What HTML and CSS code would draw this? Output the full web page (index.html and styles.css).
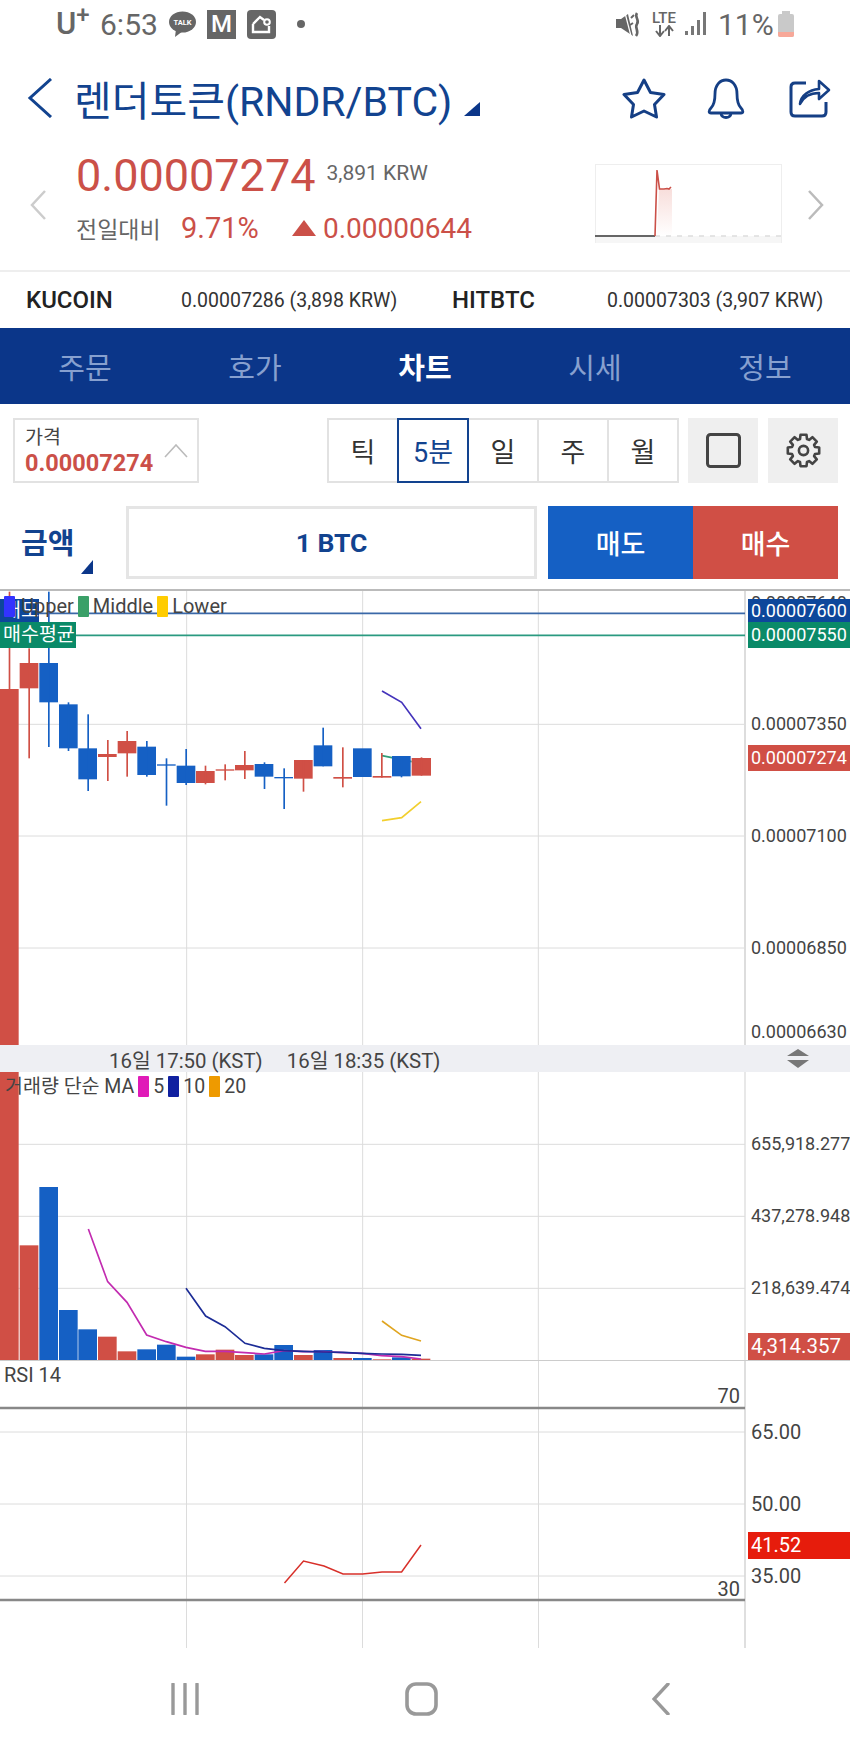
FILE: index.html
```html
<!DOCTYPE html>
<html lang="ko">
<head>
    <meta charset="UTF-8">
    <meta name="viewport" content="width=device-width, initial-scale=1.0">
    <title>렌더토큰 RNDR/BTC 차트</title>
    <link rel="stylesheet" href="styles.css">
</head>
<body>
    <div class="status-bar">
        <span class="carrier">U<sup>+</sup></span>
        <span class="clock">6:53</span>
        <svg class="ico-talk" width="27" height="26" viewBox="0 0 27 26">
            <ellipse cx="13.5" cy="11" rx="13.5" ry="10.5" fill="#666"/>
            <path d="M7 18 L6 26 L14 20 Z" fill="#666"/>
            <text x="13.5" y="14" text-anchor="middle" class="talk-text">TALK</text>
        </svg>
        <span class="app-box app-m">M</span>
        <span class="app-box app-home">
            <svg width="21" height="19" viewBox="0 0 21 19">
                <path d="M2 9 L9 2 L13 5 M2 9 V17 H18 V11" fill="none" stroke="#fff" stroke-width="2.4"/>
                <circle cx="16" cy="7" r="2.8" fill="none" stroke="#fff" stroke-width="2"/>
            </svg>
        </span>
        <span class="status-dot"></span>
        <span class="status-right">
            <svg width="25" height="25" viewBox="0 0 25 25">
                <path d="M0 7 H5 L12 2 L17 24 L5 16 H0 Z" fill="#666"/>
                <path d="M9 1 L15 24" stroke="#fff" stroke-width="1.2"/>
                <path d="M15 6 L18 3 M17 11 L14 13" fill="none" stroke="#666" stroke-width="2"/>
                <path d="M21 1 C18 5 24 8 21 12 C18 16 24 19 20 24" fill="none" stroke="#666" stroke-width="2.6"/>
            </svg>
            <span class="lte">LTE
                <svg width="24" height="12" viewBox="0 0 24 12">
                    <path d="M8 0 V9 M4 6 L8 11 L12 6 M17 11 V2 M13 6 L17 1 L21 6" fill="none" stroke="#666" stroke-width="2"/>
                </svg>
            </span>
            <svg class="ico-signal" width="21" height="24" viewBox="0 0 21 24">
                <path d="M0 19 h3 v4 h-3 Z M6 14 h3 v9 h-3 Z M12 8 h3 v15 h-3 Z M18 0 h3 v23 h-3 Z" fill="#777"/>
            </svg>
            <span class="battery-text">11%</span>
            <span class="battery"><span class="battery-low"></span></span>
        </span>
    </div>

    <div class="title-row">
        <svg width="26" height="40" viewBox="0 0 26 40">
            <path d="M24 1 L3 20 L24 39" fill="none" stroke="#12438f" stroke-width="3"/>
        </svg>
        <h1 class="pair-name">렌더토큰(RNDR/BTC)</h1>
        <span class="corner-arrow title-arrow"></span>
        <span class="title-icons">
            <svg width="44" height="41" viewBox="0 0 44 41">
                <path d="M22 2 L28.5 14.5 L42 16.5 L32.5 26.5 L34.5 39 L22 33 L9.5 39 L11.5 26.5 L2 16.5 L15.5 14.5 Z" fill="none" stroke="#153f85" stroke-width="3" stroke-linejoin="round"/>
            </svg>
            <svg width="40" height="41" viewBox="0 0 40 41">
                <path d="M5 30 C8 27 9 24 9 16 C9 7 14 2 20 2 C26 2 31 7 31 16 C31 24 32 27 35 30 C38 33 37 35 35 35 H5 C3 35 2 33 5 30 Z" fill="none" stroke="#153f85" stroke-width="2.8"/>
                <path d="M15 35 C15 41 25 41 25 35" fill="none" stroke="#153f85" stroke-width="2.8"/>
            </svg>
            <svg class="ico-share" width="42" height="40" viewBox="0 0 42 40">
                <path d="M17 5 H6 Q2 5 2 9 V34 Q2 38 6 38 H33 Q37 38 37 34 V24" fill="none" stroke="#153f85" stroke-width="3"/>
                <path d="M11 26 C12 17 20 12 30 11 V3 L40 12 L30 21 V15 C22 15 15 18 11 26 Z" fill="none" stroke="#153f85" stroke-width="2.6" stroke-linejoin="round"/>
            </svg>
        </span>
    </div>

    <div class="quote-row">
        <svg class="quote-prev" width="17" height="30" viewBox="0 0 17 30">
            <path d="M15 1 L2 15 L15 29" fill="none" stroke="#ccc" stroke-width="2.5"/>
        </svg>
        <div class="quote-main">
            <div class="quote-price">
                <span class="price-big">0.00007274</span>
                <span class="price-krw">3,891 KRW</span>
            </div>
            <div class="quote-change">
                <span class="change-label">전일대비</span>
                <span class="change-rate">9.71%</span>
                <span class="change-up"></span>
                <span class="change-value">0.00000644</span>
            </div>
        </div>
        <svg class="spark" width="187" height="79" viewBox="0 0 187 79">
            <defs>
                <linearGradient id="sparkFill" x1="0" y1="0" x2="0" y2="1">
                    <stop offset="0" stop-color="#f8dedb"/>
                    <stop offset="1" stop-color="#fff"/>
                </linearGradient>
            </defs>
            <rect x="0.5" y="0.5" width="186" height="78" fill="#fff" stroke="#eee"/>
            <rect x="1" y="72" width="185" height="7" fill="#f6f6f6"/>
            <path d="M64 25 H77 V72 H62 Z" fill="url(#sparkFill)"/>
            <path d="M60 72 H186" stroke="#ddd" stroke-width="1.5" stroke-dasharray="5 6"/>
            <path d="M0 72 H60" stroke="#666" stroke-width="2"/>
            <path d="M60 72 L62 6 L64.5 25 L69 25 L72 24.5 L74 25 L76 23" fill="none" stroke="#cb5048" stroke-width="1.6"/>
        </svg>
        <svg class="quote-next" width="17" height="30" viewBox="0 0 17 30">
            <path d="M2 1 L15 15 L2 29" fill="none" stroke="#bbb" stroke-width="2.5"/>
        </svg>
    </div>

    <div class="exchanges">
        <strong>KUCOIN</strong>
        <span>0.00007286 (3,898 KRW)</span>
        <strong>HITBTC</strong>
        <span>0.00007303 (3,907 KRW)</span>
    </div>

    <nav class="main-tabs">
        <a>주문</a>
        <a>호가</a>
        <a class="on">차트</a>
        <a>시세</a>
        <a>정보</a>
    </nav>

    <div class="controls">
        <div class="price-box">
            <div>
                <div class="price-box-label">가격</div>
                <div class="price-box-value">0.00007274</div>
            </div>
            <svg width="24" height="14" viewBox="0 0 24 14">
                <path d="M1 13 L12 1 L23 13" fill="none" stroke="#bbb" stroke-width="1.6"/>
            </svg>
        </div>
        <div class="period-tabs">
            <span class="period">틱</span>
            <span class="period on">5분</span>
            <span class="period">일</span>
            <span class="period">주</span>
            <span class="period">월</span>
        </div>
        <span class="tool-btn">
            <svg width="35" height="35" viewBox="0 0 35 35">
                <rect x="1.5" y="1.5" width="32" height="32" rx="3" fill="none" stroke="#444" stroke-width="3"/>
            </svg>
        </span>
        <span class="tool-btn">
            <svg width="35" height="35" viewBox="-17.5 -17.5 35 35">
                <path d="M-3 -15.7 L3 -15.7 L3.5 -11.5 L5.6 -10.6 L8.9 -13.3 L13.3 -8.9 L10.6 -5.6 L11.5 -3.5 L15.7 -3 L15.7 3 L11.5 3.5 L10.6 5.6 L13.3 8.9 L8.9 13.3 L5.6 10.6 L3.5 11.5 L3 15.7 L-3 15.7 L-3.5 11.5 L-5.6 10.6 L-8.9 13.3 L-13.3 8.9 L-10.6 5.6 L-11.5 3.5 L-15.7 3 L-15.7 -3 L-11.5 -3.5 L-10.6 -5.6 L-13.3 -8.9 L-8.9 -13.3 L-5.6 -10.6 L-3.5 -11.5 Z" fill="none" stroke="#444" stroke-width="2.6" stroke-linejoin="round"/>
                <circle r="4.6" fill="none" stroke="#444" stroke-width="2.6"/>
            </svg>
        </span>
    </div>

    <div class="order-row">
        <div class="amount-select">
            <span>금액</span>
            <span class="corner-arrow amount-arrow"></span>
        </div>
        <div class="amount-box">1 BTC</div>
        <button class="order-btn sell">매도</button>
        <button class="order-btn buy">매수</button>
    </div>

    <!-- price pane, chart units are a third of a pixel -->
    <section class="pane pane-price">
        <svg class="pane-svg" width="850" height="456" viewBox="0 12 2550 1368">
            <path class="grid" d="M560 12 V1380 M1088 12 V1380 M1615 12 V1380 M0 418 H2235 M0 753 H2235 M0 1089 H2235"/>
            <path class="axis-line" d="M2235 12 V1380"/>
            <path d="M0 85 H2235" stroke="#3a68a8" stroke-width="5"/>
            <path d="M0 151 H2235" stroke="#2a9a80" stroke-width="5"/>
            <path d="M1146 318 L1205 352 L1263 431" fill="none" stroke="#4433bb" stroke-width="5"/>
            <path d="M1146 707 L1205 698 L1263 650" fill="none" stroke="#f2cf2e" stroke-width="5"/>
            <path d="M1146 512 L1235 530" fill="none" stroke="#2f9e78" stroke-width="5"/>

            <g class="up">
                <rect x="0" y="312" width="56" height="1068"/>
                <rect x="26" y="20" width="5" height="292"/>
                <rect x="59" y="234" width="56" height="76"/>
                <rect x="85" y="190" width="5" height="330"/>
                <rect x="294" y="507" width="56" height="9"/>
                <rect x="321" y="465" width="5" height="123"/>
                <rect x="353" y="468" width="56" height="37"/>
                <rect x="379" y="438" width="5" height="137"/>
                <rect x="588" y="558" width="56" height="36"/>
                <rect x="614" y="542" width="5" height="56"/>
                <rect x="647" y="553" width="56" height="4"/>
                <rect x="673" y="538" width="5" height="48"/>
                <rect x="705" y="540" width="56" height="16"/>
                <rect x="732" y="498" width="5" height="84"/>
                <rect x="882" y="525" width="56" height="56"/>
                <rect x="908" y="525" width="5" height="95"/>
                <rect x="1000" y="576" width="56" height="5"/>
                <rect x="1026" y="487" width="5" height="120"/>
                <rect x="1118" y="573" width="56" height="5"/>
                <rect x="1143" y="504" width="5" height="74"/>
                <rect x="1235" y="519" width="58" height="53"/>
                <rect x="1262" y="517" width="5" height="55"/>
            </g>
            <g class="down">
                <rect x="118" y="234" width="56" height="118"/>
                <rect x="144" y="20" width="5" height="466"/>
                <rect x="177" y="358" width="56" height="132"/>
                <rect x="203" y="352" width="5" height="146"/>
                <rect x="235" y="490" width="56" height="93"/>
                <rect x="262" y="388" width="5" height="230"/>
                <rect x="412" y="485" width="56" height="85"/>
                <rect x="438" y="468" width="5" height="107"/>
                <rect x="471" y="538" width="56" height="4"/>
                <rect x="497" y="520" width="5" height="142"/>
                <rect x="530" y="542" width="56" height="52"/>
                <rect x="556" y="492" width="5" height="108"/>
                <rect x="764" y="537" width="56" height="38"/>
                <rect x="791" y="532" width="5" height="80"/>
                <rect x="823" y="576" width="56" height="4"/>
                <rect x="850" y="550" width="5" height="122"/>
                <rect x="941" y="481" width="56" height="63"/>
                <rect x="967" y="428" width="5" height="116"/>
                <rect x="1059" y="490" width="56" height="86"/>
                <rect x="1176" y="513" width="56" height="61"/>
                <rect x="1202" y="513" width="5" height="64"/>
            </g>
        </svg>

        <span class="tag tag-sell-left">매도</span>
        <span class="tag tag-avg-left">매수평균</span>
        <div class="legend legend-price">
            <i class="swatch sw-blue"></i><span class="leg-upper">Upper</span>
            <i class="swatch sw-green"></i><span>Middle</span>
            <i class="swatch sw-yellow"></i><span>Lower</span>
        </div>

        <span class="tick t-7640">0.00007640</span>
        <span class="tag tag-right tag-sell-right">0.00007600</span>
        <span class="tag tag-right tag-avg-right">0.00007550</span>
        <span class="tick t-7350">0.00007350</span>
        <span class="tag tag-right tag-last">0.00007274</span>
        <span class="tick t-7100">0.00007100</span>
        <span class="tick t-6850">0.00006850</span>
        <span class="tick t-6630">0.00006630</span>
    </section>

    <div class="time-bar">
        <span class="time-first">16일 17:50 (KST)</span>
        <span class="time-second">16일 18:35 (KST)</span>
        <svg class="pane-resize" width="22" height="20" viewBox="0 0 22 20">
            <path d="M11 0 L22 7 H0 Z M0 11 H22 L11 19 Z" fill="#777"/>
        </svg>
    </div>

    <section class="pane pane-volume">
        <svg class="pane-svg" width="850" height="288" viewBox="0 96 2550 864">
            <path class="grid" d="M560 96 V960 M1088 96 V960 M1615 96 V960 M0 313 H2235 M0 529 H2235 M0 745 H2235"/>
            <path class="axis-line thin" d="M2235 96 V960"/>
            <g class="up">
                <rect x="0" y="96" width="56" height="864"/>
                <rect x="59" y="616" width="56" height="344"/>
                <rect x="294" y="890" width="56" height="70"/>
                <rect x="353" y="934" width="56" height="26"/>
                <rect x="588" y="943" width="56" height="17"/>
                <rect x="647" y="929" width="56" height="31"/>
                <rect x="705" y="945" width="56" height="15"/>
                <rect x="882" y="945" width="56" height="15"/>
                <rect x="1000" y="954" width="56" height="6"/>
                <rect x="1118" y="958" width="56" height="2"/>
                <rect x="1235" y="956" width="56" height="4"/>
            </g>
            <g class="down">
                <rect x="118" y="441" width="56" height="519"/>
                <rect x="177" y="810" width="56" height="150"/>
                <rect x="235" y="868" width="56" height="92"/>
                <rect x="412" y="928" width="56" height="32"/>
                <rect x="471" y="914" width="56" height="46"/>
                <rect x="530" y="950" width="56" height="10"/>
                <rect x="764" y="943" width="56" height="17"/>
                <rect x="823" y="915" width="56" height="45"/>
                <rect x="941" y="930" width="56" height="30"/>
                <rect x="1059" y="954" width="56" height="6"/>
                <rect x="1176" y="952" width="56" height="8"/>
            </g>
            <polyline class="ma" stroke="#c22bb0" points="265,567 323,725 381,787 440,885 499,905 558,922 616,934 675,934 734,938 793,942 852,932 910,935 969,935 1028,938 1086,940 1145,947 1205,950 1263,957"/>
            <polyline class="ma" stroke="#1c2c96" points="558,745 617,828 675,860 735,910 793,925 852,932 910,934 969,936 1028,937 1086,940 1145,942 1205,943 1263,946"/>
            <polyline class="ma" stroke="#e0a520" points="1146,843 1205,886 1263,903"/>
        </svg>

        <div class="legend legend-volume">
            <span>거래량 단순 MA</span>
            <i class="swatch sw-magenta"></i><span>5</span>
            <i class="swatch sw-navy"></i><span>10</span>
            <i class="swatch sw-orange"></i><span>20</span>
        </div>

        <span class="tick v-1">655,918.277</span>
        <span class="tick v-2">437,278.948</span>
        <span class="tick v-3">218,639.474</span>
        <span class="tag tag-right tag-volume">4,314.357</span>
    </section>

    <section class="pane pane-rsi">
        <svg class="pane-svg" width="850" height="288" viewBox="0 1360 850 288">
            <path class="grid-rsi" d="M186.5 1360 V1648 M362.5 1360 V1648 M538.5 1360 V1648 M0 1432 H745 M0 1504 H745 M0 1576 H745"/>
            <path class="axis-line-rsi" d="M745 1360 V1648"/>
            <path d="M0 1408 H745 M0 1600 H745" stroke="#888" stroke-width="2.4"/>
            <polyline points="284.5,1583 303.5,1561 324,1566 343,1574 362.6,1574 382,1572 401.6,1572 421,1545" fill="none" stroke="#d8302a" stroke-width="1.5"/>
        </svg>
        <span class="rsi-name">RSI 14</span>
        <span class="rsi-level l-70">70</span>
        <span class="rsi-level l-30">30</span>
        <span class="tick r-65">65.00</span>
        <span class="tick r-50">50.00</span>
        <span class="tag tag-right tag-rsi">41.52</span>
        <span class="tick r-35">35.00</span>
    </section>

    <div class="soft-keys">
        <svg width="30" height="32" viewBox="0 0 30 32">
            <path d="M3 1 V31 M15 1 V31 M27 1 V31" stroke="#999" stroke-width="3.4" stroke-linecap="round"/>
        </svg>
        <svg width="33" height="34" viewBox="0 0 33 34">
            <rect x="2" y="2" width="29" height="30" rx="9" fill="none" stroke="#999" stroke-width="3.6"/>
        </svg>
        <svg width="18" height="32" viewBox="0 0 18 32">
            <path d="M16 1 L2 16 L16 31" fill="none" stroke="#999" stroke-width="3.4" stroke-linecap="round"/>
        </svg>
    </div>
</body>
</html>
```

FILE: styles.css
```css
* {
    box-sizing: border-box;
}
body {
    margin: 0;
    width: 850px;
    font-family: Roboto, "Noto Sans CJK KR", sans-serif;
    background-color: #fff;
    color: #333;
}

/* status bar */
.status-bar {
    display: flex;
    align-items: center;
    height: 48px;
    padding-left: 56px;
    color: #666;
}
.carrier {
    font-size: 31px;
    font-weight: 500;
    width: 44px;
    line-height: 30px;
}
.carrier sup {
    font-size: 24px;
    line-height: 0;
}
.clock {
    font-size: 30px;
    width: 69px;
}
.talk-text {
    font-size: 7.5px;
    font-weight: 700;
    fill: #fff;
}
.app-box {
    display: flex;
    align-items: center;
    justify-content: center;
    width: 29px;
    height: 29px;
    background-color: #666;
    color: #fff;
    font-size: 24px;
    font-weight: 500;
}
.app-m {
    margin-left: 11px;
}
.app-home {
    margin-left: 11px;
    border-radius: 4px;
}
.status-dot {
    width: 8px;
    height: 8px;
    margin-left: 21px;
    border-radius: 50%;
    background-color: #666;
}
.status-right {
    display: flex;
    align-items: center;
    margin-left: 311px;
}
.lte {
    display: flex;
    flex-direction: column;
    align-items: center;
    width: 24px;
    margin-left: 11px;
    font-size: 15px;
    font-weight: 500;
    line-height: 13px;
}
.ico-signal {
    margin-left: 9px;
}
.battery-text {
    margin-left: 12px;
    width: 60px;
    font-size: 30px;
}
.battery {
    position: relative;
    width: 16px;
    height: 23px;
    margin-top: 2px;
    background-color: #c9c9c9;
    border-radius: 2px;
}
.battery::before {
    content: "";
    position: absolute;
    top: -3px;
    left: 4px;
    width: 8px;
    height: 3px;
    background-color: #c9c9c9;
}
.battery-low {
    position: absolute;
    left: 0;
    right: 0;
    bottom: 0;
    height: 5px;
    background-color: #f7a899;
    border-radius: 0 0 2px 2px;
}

/* pair title */
.title-row {
    display: flex;
    align-items: center;
    height: 100px;
    padding-left: 27px;
}
.pair-name {
    margin: 0 0 0 21px;
    font-size: 41px;
    font-weight: 400;
    color: #12438f;
    white-space: nowrap;
}
.corner-arrow {
    width: 0;
    height: 0;
    border-style: solid;
    border-color: transparent #0b3689 #0b3689 transparent;
}
.title-arrow {
    margin: 22px 0 0 12px;
    border-width: 7px 8px;
}
.title-icons {
    display: flex;
    align-items: center;
    gap: 40px;
    margin-left: 142px;
}
.ico-share {
    margin-left: 3px;
}

/* current quote */
.quote-row {
    display: flex;
    align-items: flex-start;
    height: 122px;
    padding: 0 26px 0 30px;
}
.quote-prev {
    margin-top: 42px;
}
.quote-main {
    flex: 1;
    padding: 4px 0 0 29px;
}
.quote-price {
    display: flex;
    align-items: center;
    height: 46px;
    white-space: nowrap;
}
.price-big {
    font-size: 45px;
    color: #cb5048;
}
.price-krw {
    margin-left: 11px;
    margin-bottom: 4px;
    font-size: 21px;
    color: #666;
}
.quote-change {
    display: flex;
    align-items: center;
    height: 34px;
    margin-top: 13px;
    white-space: nowrap;
    color: #cb5048;
}
.change-label {
    width: 105px;
    font-size: 23px;
    color: #666;
}
.change-rate {
    width: 111px;
    font-size: 29px;
}
.change-up {
    width: 0;
    height: 0;
    margin-right: 7px;
    border-style: solid;
    border-width: 0 12px 16px;
    border-color: transparent transparent #cb5048;
}
.change-value {
    font-size: 28px;
}
.spark {
    margin-top: 16px;
}
.quote-next {
    margin: 42px 0 0 25px;
}

/* other exchanges */
.exchanges {
    display: grid;
    grid-template-columns: 155px 271px 155px auto;
    align-items: center;
    height: 58px;
    padding-left: 26px;
    border-top: 2px solid #eee;
    font-size: 19.5px;
    white-space: nowrap;
}
.exchanges strong {
    font-size: 24px;
    font-weight: 500;
    color: #222;
}

/* blue tab bar */
.main-tabs {
    display: grid;
    grid-template-columns: repeat(5, 1fr);
    align-items: center;
    height: 76px;
    background-color: #0b3689;
    font-size: 29px;
    text-align: center;
    color: #87a0cf;
}
.main-tabs .on {
    color: #fff;
    font-weight: 700;
}

/* chart controls */
.controls {
    display: flex;
    height: 65px;
    margin: 14px 12px 0 13px;
}
.price-box {
    display: flex;
    flex-shrink: 0;
    align-items: center;
    justify-content: space-between;
    width: 186px;
    padding: 0 9px 0 10px;
    border: 2px solid #e2e2e2;
}
.price-box-label {
    font-size: 19.5px;
    line-height: 24px;
    color: #444;
}
.price-box-value {
    font-size: 23.5px;
    font-weight: 700;
    line-height: 26px;
    color: #cb5048;
}
.period-tabs {
    display: flex;
    margin-left: 128px;
}
.period {
    display: flex;
    align-items: center;
    justify-content: center;
    flex-shrink: 0;
    width: 72px;
    margin-right: -2px;
    border: 2px solid #e2e2e2;
    font-size: 27px;
}
.period.on {
    position: relative;
    border-color: #12438f;
    color: #12438f;
}
.tool-btn {
    display: flex;
    align-items: center;
    justify-content: center;
    width: 70px;
    margin-left: 11px;
    background-color: #efefef;
}
.tool-btn + .tool-btn {
    margin-left: 10px;
}

/* order amount */
.order-row {
    display: flex;
    height: 73px;
    margin: 23px 12px 0 0;
}
.amount-select {
    position: relative;
    width: 126px;
    padding: 18px 0 0 21px;
    font-size: 29px;
    font-weight: 700;
    line-height: 40px;
    color: #12438f;
}
.amount-arrow {
    position: absolute;
    left: 81px;
    top: 54px;
    border-width: 7px 6px;
}
.amount-box {
    display: flex;
    align-items: center;
    justify-content: center;
    width: 411px;
    margin-right: 11px;
    border: 3px solid #e5e5e5;
    font-size: 26.5px;
    font-weight: 700;
    color: #12438f;
}
.order-btn {
    width: 145px;
    padding: 0;
    border: none;
    font-family: inherit;
    font-size: 27px;
    font-weight: 500;
    color: #fff;
}
.sell {
    background-color: #1560c4;
}
.buy {
    background-color: #d04f45;
}

/* chart panes */
.pane {
    position: relative;
    overflow: hidden;
    font-size: 18px;
    color: #444;
}
.pane-price {
    height: 456px;
    margin-top: 10px;
}
.pane-price::before {
    content: "";
    position: absolute;
    top: 0;
    left: 0;
    right: 0;
    height: 2px;
    background-color: #bbb;
    z-index: 1;
}
.pane-volume {
    height: 288px;
}
.pane-rsi {
    height: 288px;
    border-top: 1px solid #ccc;
    font-size: 20px;
}
.pane-svg {
    position: absolute;
    top: 0;
    left: 0;
}
.pane-rsi .pane-svg {
    top: -1px;
}
.grid {
    fill: none;
    stroke: #dcdcdc;
    stroke-width: 3;
}
.grid-rsi {
    fill: none;
    stroke: #dcdcdc;
    stroke-width: 1;
}
.axis-line {
    stroke: #ddd;
    stroke-width: 6;
}
.axis-line.thin {
    stroke-width: 4;
}
.axis-line-rsi {
    stroke: #d5d5d5;
    stroke-width: 1.5;
}
.up {
    fill: #d04f45;
}
.down {
    fill: #1560c4;
}
.ma {
    fill: none;
    stroke-width: 5;
}

/* legends */
.legend {
    position: absolute;
    display: flex;
    align-items: center;
    height: 21px;
    line-height: 21px;
    white-space: nowrap;
    font-size: 20px;
}
.legend-price {
    top: 7px;
    left: 4px;
}
.legend-volume {
    top: 4px;
    left: 5px;
    font-size: 19.5px;
}
.swatch {
    display: block;
    width: 11px;
    height: 21px;
    border-radius: 1px;
}
.legend-price .swatch {
    margin-right: 4px;
}
.legend-price span {
    margin-right: 4px;
}
.legend-price .leg-upper {
    margin-left: 2px;
}
.legend-volume .swatch {
    margin: 0 4px 0 4px;
}
.sw-blue { background-color: #3333ff; }
.sw-green { background-color: #3aa068; }
.sw-yellow { background-color: #ffcc00; }
.sw-magenta { background-color: #e01ab8; }
.sw-navy { background-color: #1020a0; }
.sw-orange { background-color: #ee9a00; }

/* price tags */
.tag {
    position: absolute;
    height: 26px;
    padding-left: 3px;
    line-height: 26px;
    white-space: nowrap;
    color: #fff;
}
.tag-sell-left {
    top: 10px;
    left: 0;
    width: 39px;
    height: 23px;
    line-height: 23px;
    font-size: 19.5px;
    background-color: #0d479b;
}
.tag-avg-left {
    top: 33px;
    left: 0;
    width: 76px;
    font-size: 19.5px;
    background-color: #0a8a68;
}
.tag-right {
    left: 748px;
    width: 102px;
}
.tag-sell-right {
    top: 10px;
    height: 23px;
    line-height: 23px;
    background-color: #0d479b;
}
.tag-avg-right {
    top: 33px;
    background-color: #0a8a68;
}
.tag-last {
    top: 156px;
    background-color: #d04f45;
}
.tag-volume {
    top: 261px;
    height: 27px;
    font-size: 20.5px;
    background-color: #d04f45;
}
.tag-rsi {
    top: 171px;
    height: 27px;
    line-height: 27px;
    background-color: #e61c0c;
}

/* axis labels */
.tick {
    position: absolute;
    left: 751px;
    height: 22px;
    line-height: 22px;
    white-space: nowrap;
}
.t-7640 { top: 3px; }
.t-7350 { top: 124px; }
.t-7100 { top: 236px; }
.t-6850 { top: 348px; }
.t-6630 { top: 432px; }
.v-1 { top: 61px; }
.v-2 { top: 133px; }
.v-3 { top: 205px; }
.r-65 { top: 60px; }
.r-50 { top: 132px; }
.r-35 { top: 204px; }
.rsi-name {
    position: absolute;
    top: 3px;
    left: 4px;
    line-height: 22px;
}
.rsi-level {
    position: absolute;
    right: 110px;
    line-height: 22px;
}
.l-70 { top: 24px; }
.l-30 { top: 217px; }

/* time axis */
.time-bar {
    position: relative;
    display: flex;
    align-items: center;
    height: 27px;
    padding-left: 109px;
    background-color: #eeeff3;
    font-size: 20.4px;
    color: #444;
    white-space: nowrap;
}
.time-second {
    margin-left: 24px;
}
.pane-resize {
    position: absolute;
    top: 4px;
    left: 787px;
}

/* android navigation */
.soft-keys {
    display: flex;
    align-items: center;
    height: 100px;
    padding: 2px 0 0 170px;
}
.soft-keys svg:nth-child(2) {
    margin-left: 205px;
}
.soft-keys svg:nth-child(3) {
    margin-left: 214px;
}
```
